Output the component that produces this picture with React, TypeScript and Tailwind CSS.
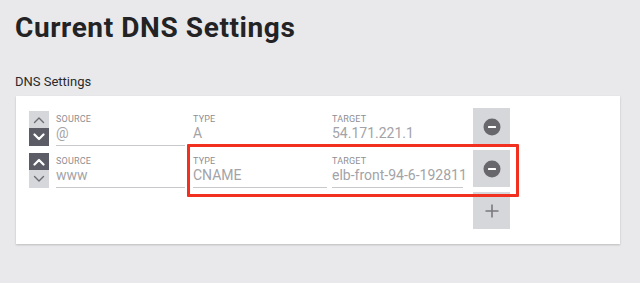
import React from "react";

function Chevron({ up, color, width = 1.6 }: { up: boolean; color: string; width?: number }) {
  return (
    <svg width="12" height="8" viewBox="0 0 12 8">
      <path
        d={up ? "M1.5 6.5 L6 2 L10.5 6.5" : "M1.5 1.5 L6 6 L10.5 1.5"}
        fill="none"
        stroke={color}
        strokeWidth={width}
        strokeLinecap="round"
        strokeLinejoin="round"
      />
    </svg>
  );
}

function Arrows({ upDark }: { upDark: boolean }) {
  return (
    <div className="mt-[3px] flex w-[20px] flex-col">
      <div className={`flex h-[17px] items-center justify-center ${upDark ? "bg-[#5b5c66]" : "bg-[#d6d7db]"}`}>
        <Chevron up color={upDark ? "#ffffff" : "#6b6c72"} width={upDark ? 2.2 : 1.4} />
      </div>
      <div className={`flex h-[18px] items-center justify-center ${upDark ? "bg-[#d6d7db]" : "bg-[#5b5c66]"}`}>
        <Chevron up={false} color={upDark ? "#6b6c72" : "#ffffff"} width={upDark ? 1.4 : 2.2} />
      </div>
    </div>
  );
}

function Field({ label, value, className }: { label: string; value: string; className: string }) {
  return (
    <div className={`h-[38px] border-b border-[#c9c9cc] pt-[6px] ${className}`}>
      <div className="text-[9px] leading-[10px] tracking-[0.2px] text-[#8e8e92]">{label}</div>
      <div className="whitespace-nowrap text-[14px] leading-[18px] text-[#a3a3a7]">{value}</div>
    </div>
  );
}

function MinusBox() {
  return (
    <div className="ml-[10px] flex h-[37px] w-[37px] items-center justify-center bg-[#d6d7db]">
      <svg width="18" height="18" viewBox="0 0 18 18">
        <circle cx="9" cy="9" r="8.5" fill="#68686c" />
        <rect x="5" y="8" width="8" height="2" rx="0.5" fill="#ffffff" />
      </svg>
    </div>
  );
}

export default function App() {
  return (
    <div className="h-[283px] w-[640px] overflow-hidden bg-[#e9e9eb] pl-[15px] pt-[12px]" style={{ fontFamily: "Roboto, 'Noto Sans', sans-serif" }}>
      <h1 className="text-[28px] font-bold leading-[32px] tracking-[0.6px] text-[#232325]">Current DNS Settings</h1>
      <div className="mt-[30px] text-[13px] leading-[16px] text-[#2a2a2c]">DNS Settings</div>
      <div className="mt-[6px] ml-[1px] h-[148px] w-[604px] bg-white pl-[13px] pt-[12px] shadow-[0_1px_2px_rgba(0,0,0,0.2)]">
        <div className="flex items-start">
          <Arrows upDark={false} />
          <Field label="SOURCE" value="@" className="ml-[7px] w-[129px]" />
          <Field label="TYPE" value="A" className="ml-[8px] w-[134px]" />
          <Field label="TARGET" value="54.171.221.1" className="ml-[5px] w-[131px]" />
          <MinusBox />
        </div>
        <div className="relative mt-[4px] flex items-start">
          <Arrows upDark />
          <Field label="SOURCE" value="www" className="ml-[7px] w-[129px]" />
          <Field label="TYPE" value="CNAME" className="ml-[8px] w-[134px]" />
          <Field label="TARGET" value="elb-front-94-6-192811" className="ml-[5px] w-[131px]" />
          <MinusBox />
          <div className="absolute left-[158px] top-[-6px] h-[53px] w-[332px] rounded-[1px] border-[3px] border-[#f2301f]" />
        </div>
        <div className="mt-[4px] flex">
          <div className="ml-[444px] flex h-[37px] w-[37px] items-center justify-center bg-[#d6d7db]">
            <svg width="16" height="16" viewBox="0 0 16 16">
              <path d="M8 1.5 V14.5 M1.5 8 H14.5" stroke="#7a7a7e" strokeWidth="1.6" />
            </svg>
          </div>
        </div>
      </div>
    </div>
  );
}
